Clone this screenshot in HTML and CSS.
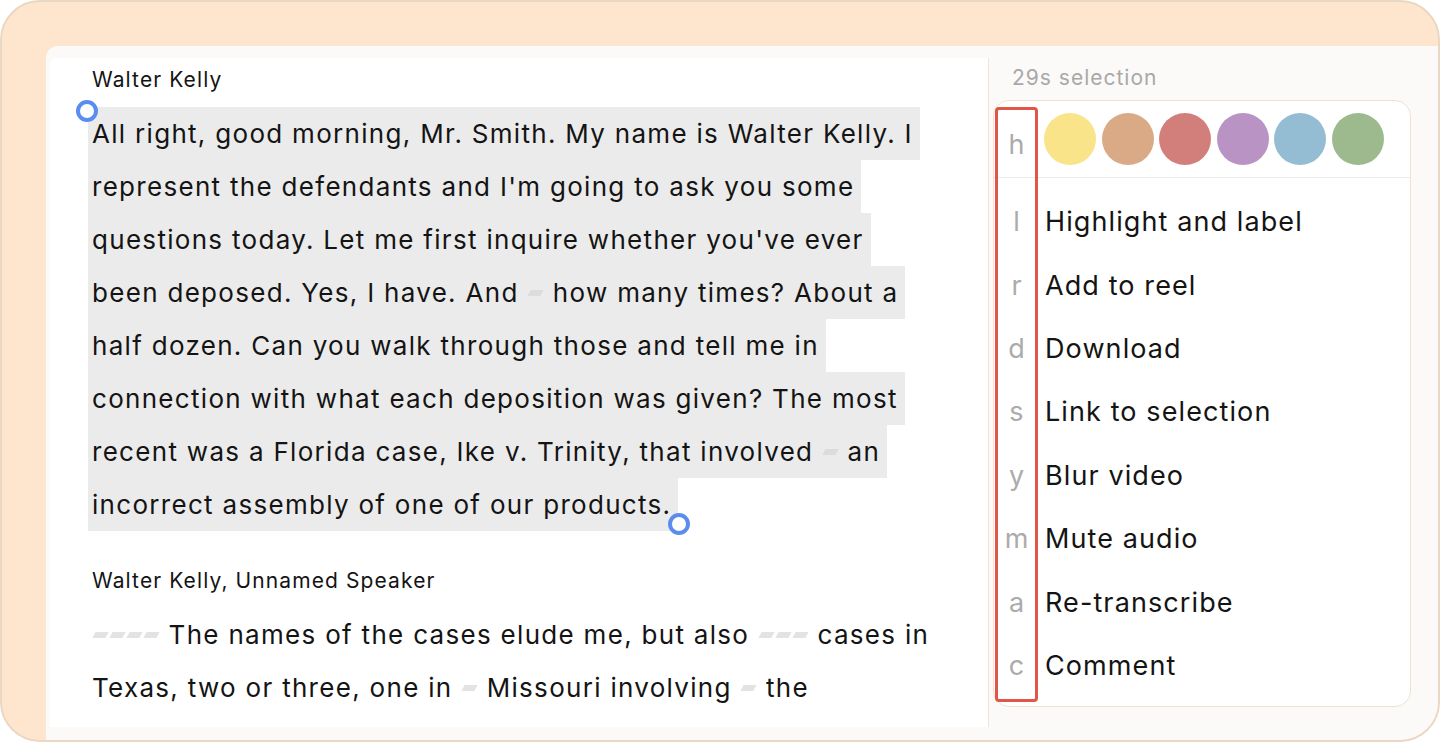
FILE: index.html
```html
<!DOCTYPE html>
<html lang="en">
<head>
    <meta charset="UTF-8">
    <title>Transcript selection</title>
    <link rel="stylesheet" href="styles.css">
</head>
<body>

    <div class="frame">
        <div class="panel">

            <div class="transcript">
                <div class="speaker">Walter Kelly</div>
                <p class="para"><span class="sel">All right, good morning, Mr. Smith. My name is Walter Kelly. I<br>represent the defendants and I'm going to ask you some<br>questions today. Let me first inquire whether you've ever<br>been deposed. Yes, I have. And <i class="gap"></i> how many times? About a<br>half dozen. Can you walk through those and tell me in<br>connection with what each deposition was given? The most<br>recent was a Florida case, Ike v. Trinity, that involved <i class="gap"></i> an<br>incorrect assembly of one of our products.</span></p>

                <div class="speaker">Walter Kelly, Unnamed Speaker</div>
                <p class="para"><i class="gap"></i><i class="gap"></i><i class="gap"></i><i class="gap"></i> The names of the cases elude me, but also <i class="gap"></i><i class="gap"></i><i class="gap"></i> cases in<br>Texas, two or three, one in <i class="gap"></i> Missouri involving <i class="gap"></i> the</p>

                <!-- ручки выделения -->
                <span class="handle handle-start"></span>
                <span class="handle handle-end"></span>
            </div>

            <div class="side">
                <div class="sel-title">29s selection</div>
                <div class="menu">
                    <div class="row swatches">
                        <span class="key">h</span>
                        <div class="colors">
                            <span class="dot" style="background:#f9e489"></span>
                            <span class="dot" style="background:#daa985"></span>
                            <span class="dot" style="background:#d27f7c"></span>
                            <span class="dot" style="background:#b893c3"></span>
                            <span class="dot" style="background:#94bdd3"></span>
                            <span class="dot" style="background:#9cba8e"></span>
                        </div>
                    </div>
                    <div class="items">
                        <div class="row"><span class="key">l</span><span class="label">Highlight and label</span></div>
                        <div class="row"><span class="key">r</span><span class="label">Add to reel</span></div>
                        <div class="row"><span class="key">d</span><span class="label">Download</span></div>
                        <div class="row"><span class="key">s</span><span class="label">Link to selection</span></div>
                        <div class="row"><span class="key">y</span><span class="label">Blur video</span></div>
                        <div class="row"><span class="key">m</span><span class="label">Mute audio</span></div>
                        <div class="row"><span class="key">a</span><span class="label">Re-transcribe</span></div>
                        <div class="row"><span class="key">c</span><span class="label">Comment</span></div>
                    </div>
                    <div class="keys-box"></div>
                </div>
            </div>

        </div>
    </div>

</body>
</html>
```

FILE: styles.css
```css
html, body {
    margin: 0;
    padding: 0;
    background: #fff;
    font-family: Inter, 'Noto Sans', sans-serif;
    color: #141414;
}

.frame {
    width: 1440px;
    height: 742px;
    box-sizing: border-box;
    border: 2px solid #ead7c4;
    border-radius: 40px;
    background-color: #fde6cd;
    padding: 44px 0 0 44px;
    overflow: hidden;
}

.panel {
    height: 100%;
    display: flex;
    background-color: #fbfaf8;
    border-radius: 12px 0 0 0;
}

/* левая колонка с текстом */
.transcript {
    position: relative;
    width: 896px;
    height: 669px;
    margin: 12px 0 0 4px;
    padding-left: 42px;
    background: #fff;
    border-right: 1px solid #f1e4d6;
    border-radius: 6px 0 0 0;
    overflow: hidden;
    flex-shrink: 0;
}

.speaker {
    font-size: 21px;
    line-height: 24px;
    letter-spacing: 1.1px;
    margin-top: 10px;
}

.speaker + .para {
    margin-top: 14.5px;
}

.para {
    margin: 0 0 14.5px 0;
    font-size: 26px;
    line-height: 53px;
    letter-spacing: 1.3px;
    padding-bottom: 24px;
    white-space: nowrap;
}

.para + .speaker {
    margin-top: 0;
}

.sel {
    background-color: #ebebeb;
    padding: 11px 7px 11px 4px;
    margin-left: -4px;
    -webkit-box-decoration-break: clone;
    box-decoration-break: clone;
}

.gap {
    display: inline-block;
    width: 13px;
    height: 6px;
    margin: 0 2px;
    background-color: #e3e3e3;
    transform: skewX(-28deg);
    vertical-align: 6px;
}

.sel .gap {
    background-color: #dcdcdc;
}

.handle {
    position: absolute;
    width: 14px;
    height: 14px;
    border: 4px solid #5a8def;
    border-radius: 50%;
    background: #fff;
}

.handle-start {
    left: 26px;
    top: 42px;
}

.handle-end {
    left: 618px;
    top: 455px;
}

/* правая колонка */
.side {
    flex: 1;
    padding: 19px 0 0 4px;
}

.sel-title {
    font-size: 21px;
    line-height: 26px;
    letter-spacing: 1px;
    color: #a8a8a8;
    margin-left: 19px;
    margin-bottom: 9px;
}

.menu {
    position: relative;
    width: 416px;
    height: 605px;
    background: #fff;
    border: 1px solid #f1e1d0;
    border-radius: 16px;
}

.row {
    display: flex;
    align-items: center;
    height: 63.4px;
    font-size: 27px;
    letter-spacing: 1.1px;
}

.key {
    width: 45px;
    text-align: center;
    color: #ababab;
    letter-spacing: 0;
}

.swatches .key {
    padding-top: 10px;
}

.label {
    margin-left: 6px;
}

.swatches {
    height: 52px;
    padding: 12px 0;
    border-bottom: 1px solid #f0ebe6;
}

.colors {
    display: flex;
    gap: 5.6px;
    margin-left: 5px;
}

.dot {
    width: 52px;
    height: 52px;
    border-radius: 50%;
}

.items {
    padding-top: 12px;
}

.keys-box {
    position: absolute;
    left: 1px;
    top: 6px;
    width: 37px;
    height: 589px;
    border: 3px solid #e0574a;
    border-radius: 4px;
}
```
